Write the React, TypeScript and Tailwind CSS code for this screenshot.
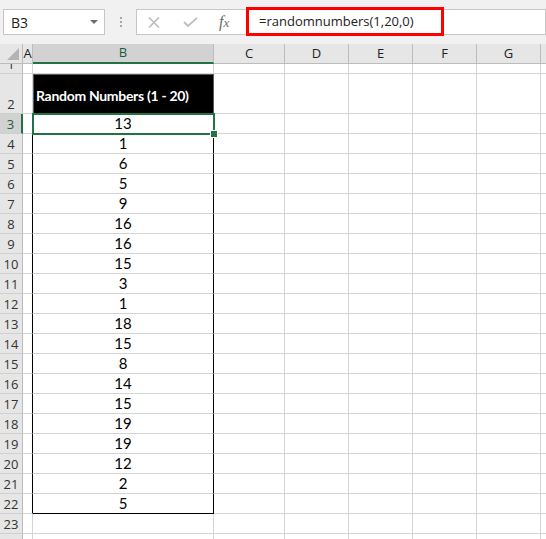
const COLS = [
  "w-[23px]",
  "w-[10px]",
  "w-[181px]",
  "w-[71px]",
  "w-[64px]",
  "w-[64px]",
  "w-[64px]",
  "w-[64px]",
  "w-[40px]",
];
const LETTERS = ["A", "B", "C", "D", "E", "F", "G", "H"];
const VALUES = [13, 1, 6, 5, 9, 16, 16, 15, 3, 1, 18, 15, 8, 14, 15, 19, 19, 12, 2, 5];

const UI_FONT = { fontFamily: '"Open Sans", "Noto Sans", sans-serif' };
const CELL_FONT = { fontFamily: 'Lato, "Open Sans", sans-serif' };

function TopBar() {
  return (
    <div className="flex h-[44px] items-start bg-[#f1f1f1] pl-[3px] pt-[9px]" style={UI_FONT}>
      {/* Name box */}
      <div className="flex h-[26px] w-[102px] shrink-0 items-center justify-between border border-[#c6c6c6] bg-white pl-[7px] pr-[6px]">
        <span className="text-[14px] text-[#222]">B3</span>
        <svg width="8" height="5" viewBox="0 0 8 5">
          <path d="M0 0h8L4 4z" fill="#6d6d6d" />
        </svg>
      </div>
      {/* dots */}
      <div className="flex w-[31px] shrink-0 flex-col items-center gap-[2px] pt-[8px]">
        <span className="h-[2px] w-[2px] bg-[#a6a6a6]" />
        <span className="h-[2px] w-[2px] bg-[#a6a6a6]" />
        <span className="h-[2px] w-[2px] bg-[#a6a6a6]" />
      </div>
      {/* formula box */}
      <div className="flex h-[26px] flex-1 items-center border border-[#c6c6c6] bg-white">
        <div className="flex w-[110px] shrink-0 items-center pl-[11px]">
          <svg width="12" height="11" viewBox="0 0 12 11" className="mr-[23px]">
            <path d="M1 0.5l10 10M11 0.5l-10 10" stroke="#bdbdbd" strokeWidth="1.6" />
          </svg>
          <svg width="15" height="10" viewBox="0 0 15 10" className="mr-[21px]">
            <path d="M1 5l4 4L14 0.8" stroke="#bdbdbd" strokeWidth="1.8" fill="none" />
          </svg>
          <span
            className="text-[16px] italic leading-none text-[#6a6a6a]"
            style={{ fontFamily: '"Liberation Serif", serif' }}
          >
            f<span className="text-[13px]">x</span>
          </span>
        </div>
        <div className="relative h-full flex-1">
          <div className="absolute -top-[3px] -left-[1px] flex h-[29px] w-[198px] items-center border-[3px] border-[#ff0000] pl-[10px]">
            <span className="text-[13px] text-[#222]">=randomnumbers(1,20,0)</span>
          </div>
        </div>
      </div>
    </div>
  );
}

function ColumnHeader() {
  return (
    <div className="flex h-[20px]" style={UI_FONT}>
      <div className="flex w-[23px] shrink-0 items-end justify-end border-r border-b border-[#bcbcbc] bg-[#e6e6e6] pr-[3px] pb-[3px]">
        <svg width="12" height="12" viewBox="0 0 12 12">
          <path d="M12 0v12H0z" fill="#b4b4b4" />
        </svg>
      </div>
      {LETTERS.map((l, i) => {
        const selected = l === "B";
        return (
          <div
            key={l}
            className={`${COLS[i + 1]} flex shrink-0 items-center justify-center overflow-hidden border-r text-[13px] ${
              selected
                ? "border-b-2 border-r-[#bcbcbc] border-b-[#217346] bg-[#d2d2d2] text-[#1e5c38]"
                : "border-b border-[#bcbcbc] bg-[#e6e6e6] text-[#222]"
            }`}
          >
            {l}
          </div>
        );
      })}
    </div>
  );
}

function RowHead({ n, selected }: { n: number; selected?: boolean }) {
  return (
    <div
      className={`flex w-[23px] shrink-0 items-end justify-center overflow-hidden border-b border-[#d0d0d0] pb-[1px] text-[13px] leading-[16px] ${
        selected
          ? "border-r-2 border-r-[#217346] bg-[#d2d2d2] text-[#1e5c38]"
          : "border-r border-r-[#bcbcbc] bg-[#e6e6e6] text-[#333]"
      }`}
      style={UI_FONT}
    >
      {n}
    </div>
  );
}

function EmptyCells({ from }: { from: number }) {
  return (
    <>
      {COLS.slice(from).map((c, i) => (
        <div key={i} className={`${c} shrink-0 border-r border-b border-[#d4d4d4] bg-white`} />
      ))}
    </>
  );
}

function Sheet() {
  return (
    <div className="flex flex-col">
      <ColumnHeader />
      {/* row 1 */}
      <div className="flex h-[10px]">
        <RowHead n={1} />
        <EmptyCells from={1} />
      </div>
      {/* row 2 */}
      <div className="flex h-[40px]">
        <RowHead n={2} />
        <div className={`${COLS[1]} shrink-0 border-r border-b border-[#d4d4d4] bg-white`} />
        <div
          className={`${COLS[2]} flex shrink-0 items-center border border-[#5a5a5a] bg-black pt-[2px] pl-[2px] text-[14px] font-bold tracking-[-0.3px] text-white`}
          style={CELL_FONT}
        >
          Random Numbers (1 - 20)
        </div>
        <EmptyCells from={3} />
      </div>
      {VALUES.map((v, i) => {
        const row = i + 3;
        const selected = row === 3;
        const last = row === 22;
        return (
          <div key={row} className="flex h-[20px]">
            <RowHead n={row} selected={selected} />
            <div className={`${COLS[1]} shrink-0 border-r border-b border-r-black border-b-[#d4d4d4] bg-white`} />
            <div
              className={`${COLS[2]} relative flex shrink-0 items-end justify-center border-r border-b border-r-black pb-[1px] text-[15px] leading-[17px] text-black bg-white ${
                last ? "border-b-black" : "border-b-[#d4d4d4]"
              } ${selected ? "z-10 outline-2 -outline-offset-1 outline-[#217346]" : ""}`}
              style={CELL_FONT}
            >
              {v}
              {selected && (
                <span className="absolute -right-[4px] -bottom-[4px] h-[6px] w-[6px] bg-[#217346] ring-1 ring-white" />
              )}
            </div>
            <EmptyCells from={3} />
          </div>
        );
      })}
      {[23, 24].map((row) => (
        <div key={row} className="flex h-[20px]">
          <RowHead n={row} />
          <EmptyCells from={1} />
        </div>
      ))}
    </div>
  );
}

export default function App() {
  return (
    <div className="h-[539px] w-[546px] overflow-hidden bg-white">
      <TopBar />
      <Sheet />
    </div>
  );
}
